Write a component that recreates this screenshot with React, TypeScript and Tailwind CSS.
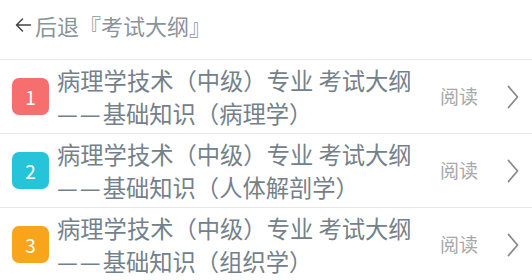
import React from "react";

const items = [
  { n: "1", color: "bg-[#f76e6e]", sub: "基础知识（病理学）" },
  { n: "2", color: "bg-[#25c4d9]", sub: "基础知识（人体解剖学）" },
  { n: "3", color: "bg-[#f9a51c]", sub: "基础知识（组织学）" },
];

export default function App() {
  return (
    <div
      className="w-[532px] h-[280px] overflow-hidden bg-white"
      style={{ fontFamily: '"Noto Sans CJK SC", "Noto Sans", sans-serif' }}
    >
      <div className="h-[60px] flex items-start pt-[10px] pl-[14px] border-b border-[#e8e8e8]">
        <svg width="18" height="30" viewBox="0 0 18 30" className="mr-[3px]">
          <path d="M16.5 15H2.5M8.5 9L2.5 15l6 6" fill="none" stroke="#444" strokeWidth="1.5" strokeLinecap="round" strokeLinejoin="round" />
        </svg>
        <span className="text-[22px] leading-[30px] text-[#8a949a]">后退『考试大纲』</span>
      </div>
      {items.map((it) => (
        <div key={it.n} className="h-[74px] flex items-center pl-[12px] border-b border-[#e8e8e8]">
          <div className={`w-[37px] h-[37px] rounded-[7px] ${it.color} flex items-center justify-center text-white text-[19px] leading-none shrink-0`}>
            {it.n}
          </div>
          <div className="ml-[8px] flex-1 text-[23.3px] leading-[33px] text-[#75818a] whitespace-nowrap">
            <div>病理学技术（中级）专业 考试大纲</div>
            <div>
              <span className="mr-[2px]">—</span>
              <span className="mr-[2px]">—</span>
              {it.sub}
            </div>
          </div>
          <span className="text-[19px] text-[#a8a8a8] mr-[29px]">阅读</span>
          <svg width="12" height="24" viewBox="0 0 12 24" className="mr-[13px]">
            <path d="M1.5 1.5L10.5 12L1.5 22.5" fill="none" stroke="#8a8a8a" strokeWidth="1.8" strokeLinecap="round" strokeLinejoin="round" />
          </svg>
        </div>
      ))}
    </div>
  );
}
